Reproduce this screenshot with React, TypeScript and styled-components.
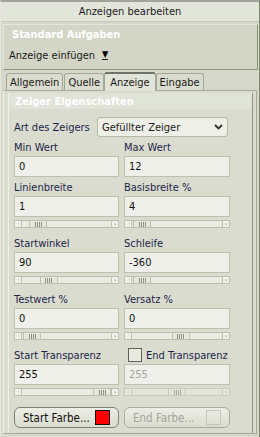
import React from "react";
import styled, { createGlobalStyle, css } from "styled-components";

const GlobalStyle = createGlobalStyle`
  html, body {
    margin: 0;
    padding: 0;
    background: #d5d8ca;
  }
  body {
    font-family: "DejaVu Sans Condensed", "Liberation Sans", sans-serif;
    font-size: 11px;
    color: #1d1f4a;
  }
`;

const Window = styled.div`
  width: 260px;
  height: 437px;
  box-sizing: border-box;
  background: #d5d8ca;
  border-top: 2px solid #a2a49c;
  border-left: 1px solid #e6e8e0;
  border-right: 1px solid #7f8a6c;
  display: flex;
  flex-direction: column;
  overflow: hidden;
`;

const TitleBar = styled.div`
  height: 19px;
  display: flex;
  align-items: center;
  justify-content: center;
  background: #e2e5da;
  border-bottom: 1px solid #c6c9bb;
  color: #1a1a1a;
`;

const TaskPanel = styled.div`
  margin: 2px 1px 0 2px;
  height: 44px;
  background: #d3d6c7;
  border-right: 1px solid #8e977c;
  border-bottom: 1px solid #8e977c;
  border-top: 1px solid #e4e6dc;
  border-left: 1px solid #e4e6dc;
  display: flex;
  flex-direction: column;
`;

const TaskHeader = styled.div`
  height: 19px;
  padding-left: 8px;
  display: flex;
  align-items: center;
  font-weight: bold;
  color: #ffffff;
`;

const TaskLink = styled.div`
  height: 22px;
  padding-left: 5px;
  display: flex;
  align-items: center;
  gap: 7px;
  color: #1a1a1a;
`;

const DropArrow = styled.span`
  font-size: 9px;
  border-bottom: 1px solid #1a1a1a;
  line-height: 9px;
  color: #000;
`;

const TabStrip = styled.div`
  margin-top: 1px;
  height: 19px;
  padding-left: 5px;
  display: flex;
  align-items: flex-end;
`;

const Tab = styled.div<{ $active?: boolean }>`
  height: 17px;
  padding: 0 3px;
  box-sizing: border-box;
  display: flex;
  align-items: center;
  background: #dadccf;
  border: 1px solid #a3a795;
  border-bottom: none;
  border-radius: 3px 3px 0 0;
  margin-right: 1px;
  color: #1a1a1a;
  ${({ $active }) =>
    $active &&
    css`
      height: 19px;
      background: #e1e4d8;
      border-top: 2px solid #70746a;
      margin: 0 0 -1px -1px;
      padding: 0 5px;
      position: relative;
      z-index: 1;
    `}
`;

const TabPage = styled.div`
  flex: 1;
  margin: 0 2px 3px 2px;
  background: #d9dccf;
  border: 1px solid #a6aa96;
  border-left-color: #eef0e6;
  padding: 2px 3px 0 4px;
  display: flex;
  flex-direction: column;
`;

const Group = styled.div`
  flex: 1;
  border-left: 1px solid #eef0e6;
  border-right: 1px solid #8e977c;
  display: flex;
  flex-direction: column;
`;

const GroupHeader = styled.div`
  height: 16px;
  margin-bottom: 8px;
  padding-left: 6px;
  display: flex;
  align-items: center;
  background: #e0e3d7;
  color: #ffffff;
  font-weight: bold;
`;

const Body = styled.div`
  padding-left: 5px;
  display: flex;
  flex-direction: column;
`;

const SelectRow = styled.div`
  height: 20px;
  display: flex;
  align-items: center;
  margin-bottom: 3px;
`;

const SelectLabel = styled.div`
  width: 83px;
  white-space: nowrap;
`;

const Select = styled.div`
  width: 131px;
  height: 20px;
  box-sizing: border-box;
  display: flex;
  align-items: center;
  justify-content: space-between;
  padding: 0 4px;
  background: #eef0e7;
  border: 1px solid #b4b8a4;
  border-radius: 3px;
  color: #1a1a1a;
`;

const Grid = styled.div`
  display: grid;
  grid-template-columns: 105px 106px;
  column-gap: 5px;
  row-gap: 3px;
`;

const Field = styled.div<{ $slider?: boolean }>`
  display: flex;
  flex-direction: column;
  margin-bottom: ${({ $slider }) => ($slider ? "5px" : "0")};
`;

const Label = styled.div`
  height: 14px;
  margin-bottom: 2px;
  display: flex;
  align-items: center;
  gap: 4px;
  white-space: nowrap;
`;

const Input = styled.div<{ $disabled?: boolean }>`
  height: 21px;
  box-sizing: border-box;
  padding-left: 4px;
  display: flex;
  align-items: center;
  background: #eff0e9;
  border: 1px solid #bcc0ae;
  color: ${({ $disabled }) => ($disabled ? "#a3a69a" : "#111")};
`;

const Scroll = styled.div<{ $disabled?: boolean }>`
  margin-top: 3px;
  height: 8px;
  box-sizing: border-box;
  display: flex;
  background: #e9ebe2;
  border: 1px solid #bcc0ae;
  opacity: ${({ $disabled }) => ($disabled ? 0.6 : 1)};
`;

const ScrollButton = styled.div`
  width: 7px;
  height: 6px;
  box-sizing: border-box;
  border-right: 1px solid #bcc0ae;
  display: flex;
  align-items: center;
  justify-content: center;
  font-size: 6px;
  line-height: 6px;
  color: #555;
  background: #f0f1ea;
  &:last-child {
    border-right: none;
    border-left: 1px solid #bcc0ae;
  }
`;

const Track = styled.div`
  flex: 1;
  position: relative;
`;

const Thumb = styled.div<{ $pos: number }>`
  position: absolute;
  top: 0;
  bottom: 0;
  width: 18px;
  left: ${({ $pos }) => `calc((100% - 18px) * ${$pos})`};
  box-sizing: border-box;
  border-left: 1px solid #bcc0ae;
  border-right: 1px solid #bcc0ae;
  background: #e6e8de;
  display: flex;
  align-items: center;
  justify-content: center;
  gap: 1px;
`;

const Grip = styled.span`
  width: 1px;
  height: 5px;
  background: #8c9080;
`;

const Checkbox = styled.span`
  width: 12px;
  height: 12px;
  margin-left: 4px;
  border: 1px solid #5e6258;
  background: #e8eae0;
  display: inline-block;
`;

const ButtonRow = styled.div`
  margin-top: 6px;
  display: grid;
  grid-template-columns: 105px 106px;
  column-gap: 5px;
`;

const Button = styled.div<{ $disabled?: boolean }>`
  height: 21px;
  box-sizing: border-box;
  display: flex;
  align-items: center;
  justify-content: space-between;
  padding: 0 8px 0 8px;
  border: 1px solid ${({ $disabled }) => ($disabled ? "#a8ab9e" : "#7c8072")};
  border-radius: 6px;
  background: linear-gradient(#eceee6, #dadccf);
  color: ${({ $disabled }) => ($disabled ? "#a3a69a" : "#111")};
  font-size: 11.5px;
`;

const Swatch = styled.span<{ $color?: string }>`
  width: 15px;
  height: 15px;
  box-sizing: border-box;
  border: 1px solid ${({ $color }) => ($color ? "#111" : "#c4c7b9")};
  background: ${({ $color }) => $color || "transparent"};
`;

function Slider({ pos, disabled }: { pos: number; disabled?: boolean }) {
  return (
    <Scroll $disabled={disabled}>
      <ScrollButton>·</ScrollButton>
      <Track>
        <Thumb $pos={pos}>
          <Grip />
          <Grip />
          <Grip />
          <Grip />
        </Thumb>
      </Track>
      <ScrollButton>›</ScrollButton>
    </Scroll>
  );
}

type FieldProps = {
  label: string;
  value: string;
  slider?: number;
  check?: boolean;
  disabled?: boolean;
};

function NumField({ label, value, slider, check, disabled }: FieldProps) {
  const hasSlider = slider !== undefined;
  return (
    <Field $slider={hasSlider}>
      <Label>
        {check && <Checkbox />}
        {label}
      </Label>
      <Input $disabled={disabled}>{value}</Input>
      {hasSlider && <Slider pos={slider} disabled={disabled} />}
    </Field>
  );
}

export default function App() {
  return (
    <>
      <GlobalStyle />
      <Window>
        <TitleBar>Anzeigen bearbeiten</TitleBar>
        <TaskPanel>
          <TaskHeader>Standard Aufgaben</TaskHeader>
          <TaskLink>
            Anzeige einfügen <DropArrow>▼</DropArrow>
          </TaskLink>
        </TaskPanel>
        <TabStrip>
          <Tab>Allgemein</Tab>
          <Tab>Quelle</Tab>
          <Tab $active>Anzeige</Tab>
          <Tab>Eingabe</Tab>
        </TabStrip>
        <TabPage>
          <Group>
            <GroupHeader>Zeiger Eigenschaften</GroupHeader>
            <Body>
              <SelectRow>
                <SelectLabel>Art des Zeigers</SelectLabel>
                <Select>
                  Gefüllter Zeiger
                  <svg width="9" height="6" viewBox="0 0 9 6">
                    <path d="M1 1 L4.5 4.5 L8 1" fill="none" stroke="#333" strokeWidth="1.8" />
                  </svg>
                </Select>
              </SelectRow>
              <Grid>
                <NumField label="Min Wert" value="0" />
                <NumField label="Max Wert" value="12" />
                <NumField label="Linienbreite" value="1" slider={0.1} />
                <NumField label="Basisbreite %" value="4" slider={0.02} />
                <NumField label="Startwinkel" value="90" slider={0.25} />
                <NumField label="Schleife" value="-360" slider={0.02} />
                <NumField label="Testwert %" value="0" slider={0.02} />
                <NumField label="Versatz %" value="0" slider={0.55} />
                <NumField label="Start Transparenz" value="255" slider={1} />
                <NumField label="End Transparenz" value="255" slider={0.5} check disabled />
              </Grid>
              <ButtonRow>
                <Button>
                  Start Farbe...
                  <Swatch $color="#ff0000" />
                </Button>
                <Button $disabled>
                  End Farbe...
                  <Swatch />
                </Button>
              </ButtonRow>
            </Body>
          </Group>
        </TabPage>
      </Window>
    </>
  );
}
